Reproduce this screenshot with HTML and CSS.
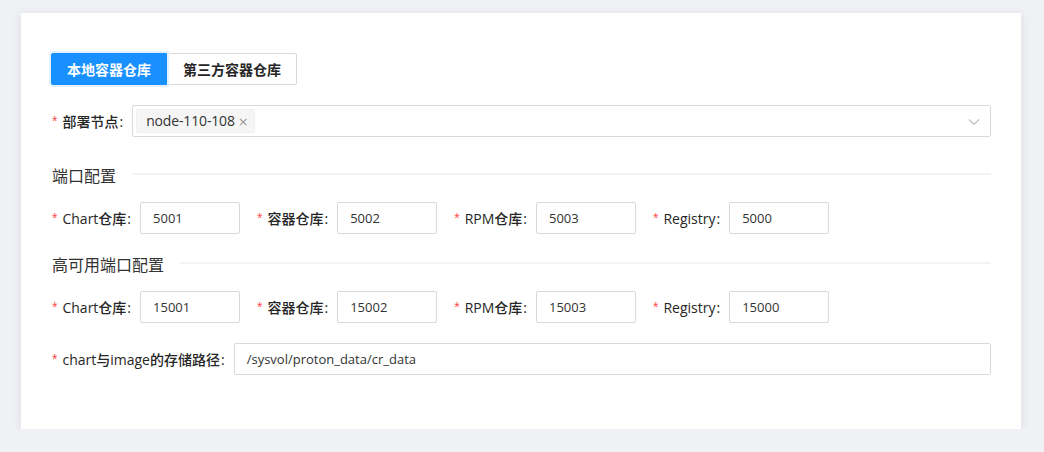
FILE: index.html
```html
<!DOCTYPE html>
<html lang="zh-CN">
<head>
<meta charset="utf-8">
<title>容器仓库</title>
<link rel="stylesheet" href="styles.css">
</head>
<body>
<div class="card">
  <div class="tabs">
    <div class="tab tab-active">本地容器仓库</div>
    <div class="tab">第三方容器仓库</div>
  </div>

  <div class="row row-first">
    <label class="label"><span class="req">*</span>部署节点</label>
    <div class="select">
      <span class="tag">node-110-108<span class="tag-close">×</span></span>
      <svg class="arrow" width="12" height="8" viewBox="0 0 12 8"><path d="M1 1.5 L6 6.5 L11 1.5" fill="none" stroke="#bfbfbf" stroke-width="1.2"/></svg>
    </div>
  </div>

  <div class="section-title section-first"><span>端口配置</span><div class="divider"></div></div>
  <div class="row row-inline">
    <div class="item"><label class="label"><span class="req">*</span>Chart仓库</label><div class="input">5001</div></div>
    <div class="item"><label class="label"><span class="req">*</span>容器仓库</label><div class="input">5002</div></div>
    <div class="item"><label class="label"><span class="req">*</span>RPM仓库</label><div class="input">5003</div></div>
    <div class="item"><label class="label"><span class="req">*</span>Registry</label><div class="input">5000</div></div>
  </div>

  <div class="section-title section-second"><span>高可用端口配置</span><div class="divider"></div></div>
  <div class="row row-inline">
    <div class="item"><label class="label"><span class="req">*</span>Chart仓库</label><div class="input">15001</div></div>
    <div class="item"><label class="label"><span class="req">*</span>容器仓库</label><div class="input">15002</div></div>
    <div class="item"><label class="label"><span class="req">*</span>RPM仓库</label><div class="input">15003</div></div>
    <div class="item"><label class="label"><span class="req">*</span>Registry</label><div class="input">15000</div></div>
  </div>

  <div class="row row-path">
    <label class="label"><span class="req">*</span>chart与image的存储路径</label>
    <div class="input input-wide">/sysvol/proton_data/cr_data</div>
  </div>
</div>
</body>
</html>
```

FILE: styles.css
```css
html, body {
  margin: 0;
  padding: 0;
  background: #f0f1f5;
  font-family: "Open Sans", "Noto Sans CJK SC", sans-serif;
  font-size: 14px;
  color: #333;
}

.card {
  box-sizing: border-box;
  width: 1000px;
  margin: 13px 0 0 21px;
  background: #fff;
  padding: 40px 30px 54px 30px;
  box-shadow: 0 2px 10px rgba(0, 0, 0, 0.09);
}

.tabs {
  display: flex;
}

.tab {
  box-sizing: border-box;
  height: 32px;
  line-height: 30px;
  padding: 0 15px;
  border: 1px solid #d9d9d9;
  font-family: "Noto Sans CJK SC", sans-serif;
  font-weight: 700;
  font-size: 14px;
  color: #262626;
  background: #fff;
  border-radius: 0 2px 2px 0;
}

.tab-active {
  background: #1890ff;
  border-color: #1890ff;
  color: #fff;
  padding: 0 15px;
  border-radius: 2px 0 0 2px;
  box-shadow: 0 0 0 2px #e3f1ff;
  position: relative;
  z-index: 1;
}

.row {
  display: flex;
  align-items: center;
  height: 32px;
}

.row-first {
  margin-top: 20px;
}

.label {
  display: flex;
  align-items: center;
  font-family: "Open Sans", "Noto Sans CJK SC", sans-serif;
  font-weight: 500;
  font-size: 14px;
  color: #262626;
  white-space: nowrap;
  padding-left: 1px;
}

.label::after {
  content: ":";
  margin: 0 9px 0 1px;
}

.req {
  color: #ff4d4f;
  font-family: "Liberation Sans", sans-serif;
  font-size: 14px;
  margin-right: 5px;
}

.select {
  flex: 1;
  box-sizing: border-box;
  height: 32px;
  border: 1px solid #d9d9d9;
  border-radius: 2px;
  display: flex;
  align-items: center;
  padding: 0 3px;
  position: relative;
}

.tag {
  box-sizing: border-box;
  height: 24px;
  line-height: 22px;
  padding: 0 5px 0 9px;
  background: #f5f5f5;
  border: 1px solid #f0f0f0;
  border-radius: 2px;
  color: #333;
  font-size: 14px;
  letter-spacing: -0.15px;
}

.tag-close {
  color: #999;
  font-size: 13px;
  margin-left: 3px;
  font-family: "DejaVu Sans", sans-serif;
}

.arrow {
  position: absolute;
  right: 10px;
  top: 12px;
}

.section-title {
  display: flex;
  align-items: center;
  height: 24px;
  font-family: "Noto Sans CJK SC", sans-serif;
  font-size: 16px;
  color: #333;
  padding-left: 1px;
}

.section-first {
  margin-top: 26px;
}

.section-second {
  margin-top: 18px;
}

.divider {
  flex: 1;
  height: 2px;
  background: #f3f3f3;
  margin-left: 16px;
  margin-top: -2px;
}

.row-inline {
  margin-top: 15px;
}

.item {
  display: flex;
  align-items: center;
  margin-right: 16px;
}

.input {
  box-sizing: border-box;
  width: 100px;
  height: 32px;
  line-height: 30px;
  border: 1px solid #d9d9d9;
  border-radius: 2px;
  padding: 0 12px;
  font-size: 13px;
  color: #333;
}

.input-wide {
  flex: 1;
  width: auto;
}

.row-path {
  margin-top: 20px;
}
```
